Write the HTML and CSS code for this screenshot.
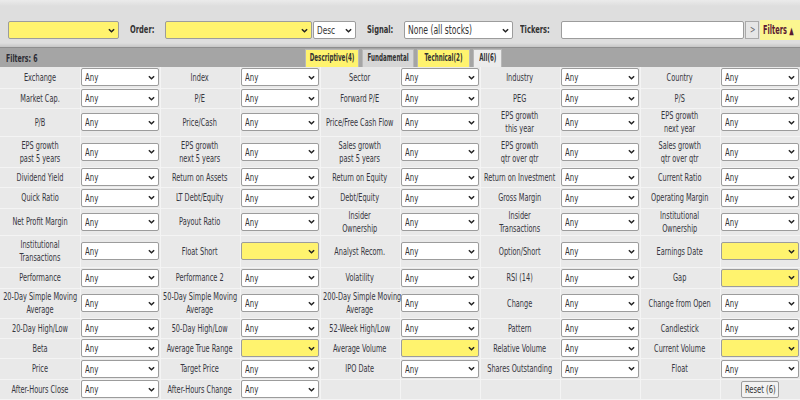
FILE: index.html
```
<!DOCTYPE html>
<html>
<head>
<meta charset="utf-8">
<link rel="stylesheet" href="styles.css">
</head>
<body>
<div class="topbar">
  <div class="sel yellow w-first"><span class="v"></span><svg class="chev" viewBox="0 0 8 5"><path d="M1 1 L4 4 L7 1"/></svg></div>
  <span class="tlabel l-order"><span class="sx">Order:</span></span>
  <div class="sel yellow w-order"><span class="v"></span><svg class="chev" viewBox="0 0 8 5"><path d="M1 1 L4 4 L7 1"/></svg></div>
  <div class="sel w-desc"><span class="v">Desc</span><svg class="chev" viewBox="0 0 8 5"><path d="M1 1 L4 4 L7 1"/></svg></div>
  <span class="tlabel l-signal"><span class="sx">Signal:</span></span>
  <div class="sel w-signal"><span class="v">None (all stocks)</span><svg class="chev" viewBox="0 0 8 5"><path d="M1 1 L4 4 L7 1"/></svg></div>
  <span class="tlabel l-tickers"><span class="sx">Tickers:</span></span>
  <div class="tinput"></div>
  <div class="gobtn"><span class="sx">&gt;</span></div>
  <div class="ftoggle"><span class="sx">Filters <span class="tri">▲</span></span></div>
</div>
<div class="filterbar">
  <div class="fcount"><span class="sx">Filters: 6</span></div>
  <div class="tabs">
    <span class="tab on w-t1"><span class="sx">Descriptive(4)</span></span>
    <span class="tab w-t2"><span class="sx">Fundamental</span></span>
    <span class="tab on w-t3"><span class="sx">Technical(2)</span></span>
    <span class="tab all w-t4"><span class="sx">All(6)</span></span>
  </div>
</div>
<table class="grid">
  <tr class="h21">
    <td class="lab"><div class="lt">Exchange</div></td><td><div class="sel"><span class="v">Any</span><svg class="chev" viewBox="0 0 8 5"><path d="M1 1 L4 4 L7 1"/></svg></div></td>
    <td class="lab"><div class="lt">Index</div></td><td><div class="sel"><span class="v">Any</span><svg class="chev" viewBox="0 0 8 5"><path d="M1 1 L4 4 L7 1"/></svg></div></td>
    <td class="lab"><div class="lt">Sector</div></td><td><div class="sel"><span class="v">Any</span><svg class="chev" viewBox="0 0 8 5"><path d="M1 1 L4 4 L7 1"/></svg></div></td>
    <td class="lab"><div class="lt">Industry</div></td><td><div class="sel"><span class="v">Any</span><svg class="chev" viewBox="0 0 8 5"><path d="M1 1 L4 4 L7 1"/></svg></div></td>
    <td class="lab"><div class="lt">Country</div></td><td><div class="sel"><span class="v">Any</span><svg class="chev" viewBox="0 0 8 5"><path d="M1 1 L4 4 L7 1"/></svg></div></td>
  </tr>
  <tr class="h20">
    <td class="lab"><div class="lt">Market Cap.</div></td><td><div class="sel"><span class="v">Any</span><svg class="chev" viewBox="0 0 8 5"><path d="M1 1 L4 4 L7 1"/></svg></div></td>
    <td class="lab"><div class="lt">P/E</div></td><td><div class="sel"><span class="v">Any</span><svg class="chev" viewBox="0 0 8 5"><path d="M1 1 L4 4 L7 1"/></svg></div></td>
    <td class="lab"><div class="lt">Forward P/E</div></td><td><div class="sel"><span class="v">Any</span><svg class="chev" viewBox="0 0 8 5"><path d="M1 1 L4 4 L7 1"/></svg></div></td>
    <td class="lab"><div class="lt">PEG</div></td><td><div class="sel"><span class="v">Any</span><svg class="chev" viewBox="0 0 8 5"><path d="M1 1 L4 4 L7 1"/></svg></div></td>
    <td class="lab"><div class="lt">P/S</div></td><td><div class="sel"><span class="v">Any</span><svg class="chev" viewBox="0 0 8 5"><path d="M1 1 L4 4 L7 1"/></svg></div></td>
  </tr>
  <tr class="h28">
    <td class="lab"><div class="lt">P/B</div></td><td><div class="sel"><span class="v">Any</span><svg class="chev" viewBox="0 0 8 5"><path d="M1 1 L4 4 L7 1"/></svg></div></td>
    <td class="lab"><div class="lt">Price/Cash</div></td><td><div class="sel"><span class="v">Any</span><svg class="chev" viewBox="0 0 8 5"><path d="M1 1 L4 4 L7 1"/></svg></div></td>
    <td class="lab"><div class="lt">Price/Free Cash Flow</div></td><td><div class="sel"><span class="v">Any</span><svg class="chev" viewBox="0 0 8 5"><path d="M1 1 L4 4 L7 1"/></svg></div></td>
    <td class="lab"><div class="lt">EPS growth<br>this year</div></td><td><div class="sel"><span class="v">Any</span><svg class="chev" viewBox="0 0 8 5"><path d="M1 1 L4 4 L7 1"/></svg></div></td>
    <td class="lab"><div class="lt">EPS growth<br>next year</div></td><td><div class="sel"><span class="v">Any</span><svg class="chev" viewBox="0 0 8 5"><path d="M1 1 L4 4 L7 1"/></svg></div></td>
  </tr>
  <tr class="h31">
    <td class="lab"><div class="lt">EPS growth<br>past 5 years</div></td><td><div class="sel"><span class="v">Any</span><svg class="chev" viewBox="0 0 8 5"><path d="M1 1 L4 4 L7 1"/></svg></div></td>
    <td class="lab"><div class="lt">EPS growth<br>next 5 years</div></td><td><div class="sel"><span class="v">Any</span><svg class="chev" viewBox="0 0 8 5"><path d="M1 1 L4 4 L7 1"/></svg></div></td>
    <td class="lab"><div class="lt">Sales growth<br>past 5 years</div></td><td><div class="sel"><span class="v">Any</span><svg class="chev" viewBox="0 0 8 5"><path d="M1 1 L4 4 L7 1"/></svg></div></td>
    <td class="lab"><div class="lt">EPS growth<br>qtr over qtr</div></td><td><div class="sel"><span class="v">Any</span><svg class="chev" viewBox="0 0 8 5"><path d="M1 1 L4 4 L7 1"/></svg></div></td>
    <td class="lab"><div class="lt">Sales growth<br>qtr over qtr</div></td><td><div class="sel"><span class="v">Any</span><svg class="chev" viewBox="0 0 8 5"><path d="M1 1 L4 4 L7 1"/></svg></div></td>
  </tr>
  <tr class="h20">
    <td class="lab"><div class="lt">Dividend Yield</div></td><td><div class="sel"><span class="v">Any</span><svg class="chev" viewBox="0 0 8 5"><path d="M1 1 L4 4 L7 1"/></svg></div></td>
    <td class="lab"><div class="lt">Return on Assets</div></td><td><div class="sel"><span class="v">Any</span><svg class="chev" viewBox="0 0 8 5"><path d="M1 1 L4 4 L7 1"/></svg></div></td>
    <td class="lab"><div class="lt">Return on Equity</div></td><td><div class="sel"><span class="v">Any</span><svg class="chev" viewBox="0 0 8 5"><path d="M1 1 L4 4 L7 1"/></svg></div></td>
    <td class="lab"><div class="lt">Return on Investment</div></td><td><div class="sel"><span class="v">Any</span><svg class="chev" viewBox="0 0 8 5"><path d="M1 1 L4 4 L7 1"/></svg></div></td>
    <td class="lab"><div class="lt">Current Ratio</div></td><td><div class="sel"><span class="v">Any</span><svg class="chev" viewBox="0 0 8 5"><path d="M1 1 L4 4 L7 1"/></svg></div></td>
  </tr>
  <tr class="h21">
    <td class="lab"><div class="lt">Quick Ratio</div></td><td><div class="sel"><span class="v">Any</span><svg class="chev" viewBox="0 0 8 5"><path d="M1 1 L4 4 L7 1"/></svg></div></td>
    <td class="lab"><div class="lt">LT Debt/Equity</div></td><td><div class="sel"><span class="v">Any</span><svg class="chev" viewBox="0 0 8 5"><path d="M1 1 L4 4 L7 1"/></svg></div></td>
    <td class="lab"><div class="lt">Debt/Equity</div></td><td><div class="sel"><span class="v">Any</span><svg class="chev" viewBox="0 0 8 5"><path d="M1 1 L4 4 L7 1"/></svg></div></td>
    <td class="lab"><div class="lt">Gross Margin</div></td><td><div class="sel"><span class="v">Any</span><svg class="chev" viewBox="0 0 8 5"><path d="M1 1 L4 4 L7 1"/></svg></div></td>
    <td class="lab"><div class="lt">Operating Margin</div></td><td><div class="sel"><span class="v">Any</span><svg class="chev" viewBox="0 0 8 5"><path d="M1 1 L4 4 L7 1"/></svg></div></td>
  </tr>
  <tr class="h25">
    <td class="lab"><div class="lt">Net Profit Margin</div></td><td><div class="sel"><span class="v">Any</span><svg class="chev" viewBox="0 0 8 5"><path d="M1 1 L4 4 L7 1"/></svg></div></td>
    <td class="lab"><div class="lt">Payout Ratio</div></td><td><div class="sel"><span class="v">Any</span><svg class="chev" viewBox="0 0 8 5"><path d="M1 1 L4 4 L7 1"/></svg></div></td>
    <td class="lab"><div class="lt">Insider<br>Ownership</div></td><td><div class="sel"><span class="v">Any</span><svg class="chev" viewBox="0 0 8 5"><path d="M1 1 L4 4 L7 1"/></svg></div></td>
    <td class="lab"><div class="lt">Insider<br>Transactions</div></td><td><div class="sel"><span class="v">Any</span><svg class="chev" viewBox="0 0 8 5"><path d="M1 1 L4 4 L7 1"/></svg></div></td>
    <td class="lab"><div class="lt">Institutional<br>Ownership</div></td><td><div class="sel"><span class="v">Any</span><svg class="chev" viewBox="0 0 8 5"><path d="M1 1 L4 4 L7 1"/></svg></div></td>
  </tr>
  <tr class="h32">
    <td class="lab"><div class="lt">Institutional<br>Transactions</div></td><td><div class="sel"><span class="v">Any</span><svg class="chev" viewBox="0 0 8 5"><path d="M1 1 L4 4 L7 1"/></svg></div></td>
    <td class="lab"><div class="lt">Float Short</div></td><td><div class="sel yellow"><span class="v"></span><svg class="chev" viewBox="0 0 8 5"><path d="M1 1 L4 4 L7 1"/></svg></div></td>
    <td class="lab"><div class="lt">Analyst Recom.</div></td><td><div class="sel"><span class="v">Any</span><svg class="chev" viewBox="0 0 8 5"><path d="M1 1 L4 4 L7 1"/></svg></div></td>
    <td class="lab"><div class="lt">Option/Short</div></td><td><div class="sel"><span class="v">Any</span><svg class="chev" viewBox="0 0 8 5"><path d="M1 1 L4 4 L7 1"/></svg></div></td>
    <td class="lab"><div class="lt">Earnings Date</div></td><td><div class="sel yellow"><span class="v"></span><svg class="chev" viewBox="0 0 8 5"><path d="M1 1 L4 4 L7 1"/></svg></div></td>
  </tr>
  <tr class="h21">
    <td class="lab"><div class="lt">Performance</div></td><td><div class="sel"><span class="v">Any</span><svg class="chev" viewBox="0 0 8 5"><path d="M1 1 L4 4 L7 1"/></svg></div></td>
    <td class="lab"><div class="lt">Performance 2</div></td><td><div class="sel"><span class="v">Any</span><svg class="chev" viewBox="0 0 8 5"><path d="M1 1 L4 4 L7 1"/></svg></div></td>
    <td class="lab"><div class="lt">Volatility</div></td><td><div class="sel"><span class="v">Any</span><svg class="chev" viewBox="0 0 8 5"><path d="M1 1 L4 4 L7 1"/></svg></div></td>
    <td class="lab"><div class="lt">RSI (14)</div></td><td><div class="sel"><span class="v">Any</span><svg class="chev" viewBox="0 0 8 5"><path d="M1 1 L4 4 L7 1"/></svg></div></td>
    <td class="lab"><div class="lt">Gap</div></td><td><div class="sel yellow"><span class="v"></span><svg class="chev" viewBox="0 0 8 5"><path d="M1 1 L4 4 L7 1"/></svg></div></td>
  </tr>
  <tr class="h30">
    <td class="lab"><div class="lt">20-Day Simple Moving<br>Average</div></td><td><div class="sel"><span class="v">Any</span><svg class="chev" viewBox="0 0 8 5"><path d="M1 1 L4 4 L7 1"/></svg></div></td>
    <td class="lab"><div class="lt">50-Day Simple Moving<br>Average</div></td><td><div class="sel"><span class="v">Any</span><svg class="chev" viewBox="0 0 8 5"><path d="M1 1 L4 4 L7 1"/></svg></div></td>
    <td class="lab"><div class="lt">200-Day Simple Moving<br>Average</div></td><td><div class="sel"><span class="v">Any</span><svg class="chev" viewBox="0 0 8 5"><path d="M1 1 L4 4 L7 1"/></svg></div></td>
    <td class="lab"><div class="lt">Change</div></td><td><div class="sel"><span class="v">Any</span><svg class="chev" viewBox="0 0 8 5"><path d="M1 1 L4 4 L7 1"/></svg></div></td>
    <td class="lab"><div class="lt">Change from Open</div></td><td><div class="sel"><span class="v">Any</span><svg class="chev" viewBox="0 0 8 5"><path d="M1 1 L4 4 L7 1"/></svg></div></td>
  </tr>
  <tr class="h20">
    <td class="lab"><div class="lt">20-Day High/Low</div></td><td><div class="sel"><span class="v">Any</span><svg class="chev" viewBox="0 0 8 5"><path d="M1 1 L4 4 L7 1"/></svg></div></td>
    <td class="lab"><div class="lt">50-Day High/Low</div></td><td><div class="sel"><span class="v">Any</span><svg class="chev" viewBox="0 0 8 5"><path d="M1 1 L4 4 L7 1"/></svg></div></td>
    <td class="lab"><div class="lt">52-Week High/Low</div></td><td><div class="sel"><span class="v">Any</span><svg class="chev" viewBox="0 0 8 5"><path d="M1 1 L4 4 L7 1"/></svg></div></td>
    <td class="lab"><div class="lt">Pattern</div></td><td><div class="sel"><span class="v">Any</span><svg class="chev" viewBox="0 0 8 5"><path d="M1 1 L4 4 L7 1"/></svg></div></td>
    <td class="lab"><div class="lt">Candlestick</div></td><td><div class="sel"><span class="v">Any</span><svg class="chev" viewBox="0 0 8 5"><path d="M1 1 L4 4 L7 1"/></svg></div></td>
  </tr>
  <tr class="h20">
    <td class="lab"><div class="lt">Beta</div></td><td><div class="sel"><span class="v">Any</span><svg class="chev" viewBox="0 0 8 5"><path d="M1 1 L4 4 L7 1"/></svg></div></td>
    <td class="lab"><div class="lt">Average True Range</div></td><td><div class="sel yellow"><span class="v"></span><svg class="chev" viewBox="0 0 8 5"><path d="M1 1 L4 4 L7 1"/></svg></div></td>
    <td class="lab"><div class="lt">Average Volume</div></td><td><div class="sel yellow"><span class="v"></span><svg class="chev" viewBox="0 0 8 5"><path d="M1 1 L4 4 L7 1"/></svg></div></td>
    <td class="lab"><div class="lt">Relative Volume</div></td><td><div class="sel"><span class="v">Any</span><svg class="chev" viewBox="0 0 8 5"><path d="M1 1 L4 4 L7 1"/></svg></div></td>
    <td class="lab"><div class="lt">Current Volume</div></td><td><div class="sel yellow"><span class="v"></span><svg class="chev" viewBox="0 0 8 5"><path d="M1 1 L4 4 L7 1"/></svg></div></td>
  </tr>
  <tr class="h21">
    <td class="lab"><div class="lt">Price</div></td><td><div class="sel"><span class="v">Any</span><svg class="chev" viewBox="0 0 8 5"><path d="M1 1 L4 4 L7 1"/></svg></div></td>
    <td class="lab"><div class="lt">Target Price</div></td><td><div class="sel"><span class="v">Any</span><svg class="chev" viewBox="0 0 8 5"><path d="M1 1 L4 4 L7 1"/></svg></div></td>
    <td class="lab"><div class="lt">IPO Date</div></td><td><div class="sel"><span class="v">Any</span><svg class="chev" viewBox="0 0 8 5"><path d="M1 1 L4 4 L7 1"/></svg></div></td>
    <td class="lab"><div class="lt">Shares Outstanding</div></td><td><div class="sel"><span class="v">Any</span><svg class="chev" viewBox="0 0 8 5"><path d="M1 1 L4 4 L7 1"/></svg></div></td>
    <td class="lab"><div class="lt">Float</div></td><td><div class="sel"><span class="v">Any</span><svg class="chev" viewBox="0 0 8 5"><path d="M1 1 L4 4 L7 1"/></svg></div></td>
  </tr>
  <tr class="h20">
    <td class="lab"><div class="lt">After-Hours Close</div></td><td><div class="sel"><span class="v">Any</span><svg class="chev" viewBox="0 0 8 5"><path d="M1 1 L4 4 L7 1"/></svg></div></td>
    <td class="lab"><div class="lt">After-Hours Change</div></td><td><div class="sel"><span class="v">Any</span><svg class="chev" viewBox="0 0 8 5"><path d="M1 1 L4 4 L7 1"/></svg></div></td>
    <td></td><td></td><td></td><td></td><td></td>
    <td class="reset-cell"><span class="reset"><span class="sx">Reset (6)</span></span></td>
  </tr>
</table>
<div class="below">
  <span class="seg s1"></span><span class="seg s2"></span><span class="seg s3"></span><span class="seg s4"></span><span class="seg s5"></span>
</div>
</body>
</html>
```

FILE: styles.css
```
html, body {
  margin: 0;
  padding: 0;
  background: #e6e6e6;
}
body {
  width: 800px;
  height: 400px;
  overflow: hidden;
  font-family: "DejaVu Sans Condensed", "DejaVu Sans", sans-serif;
  font-size: 10.5px;
  color: #363640;
}

/* horizontally condensed text, as in the reference capture */
.sx {
  display: inline-block;
  white-space: nowrap;
  transform: scaleX(0.72);
  transform-origin: left center;
}

/* ---------- top bar ---------- */
.topbar {
  height: 47px;
  box-sizing: border-box;
  padding: 21px 0 0 8px;
  display: flex;
  align-items: flex-start;
  background: linear-gradient(#ebebeb 0, #dedede 6px, #dedede 43px, #c6c6c6 47px);
}
.tlabel {
  font-weight: bold;
  font-size: 11px;
  color: #333;
  line-height: 18px;
  flex: none;
}
.tlabel .sx { transform: scaleX(0.68); }
.l-order { width: 24px; margin: 0 11px; }
.l-signal { width: 27px; margin: 0 10px 0 11px; }
.l-tickers { width: 35px; margin: 0 6px 0 7px; }

.sel {
  box-sizing: border-box;
  height: 18px;
  flex: none;
  display: flex;
  align-items: center;
  justify-content: space-between;
  background: #fff;
  border: 1px solid #9c9c9c;
  border-radius: 2px;
  padding: 0 3px 0 3px;
  color: #333;
  font-size: 10.5px;
}
.sel .v {
  display: inline-block;
  white-space: nowrap;
  transform: scaleX(0.74);
  transform-origin: left center;
}
.sel.yellow { background: #fff36e; }
.chev {
  width: 7px;
  height: 5px;
  flex: none;
}
.chev path {
  fill: none;
  stroke: #222;
  stroke-width: 1.7;
}
.w-first { width: 111px; }
.w-order { width: 147px; }
.w-desc { width: 43px; margin-left: 1px; font-size: 11px; }
.w-signal { width: 109px; font-size: 11.5px; }
.tinput {
  box-sizing: border-box;
  width: 183px;
  height: 18px;
  flex: none;
  background: #fff;
  border: 1px solid #9c9c9c;
  border-radius: 2px;
}
.gobtn {
  box-sizing: border-box;
  width: 14px;
  height: 18px;
  flex: none;
  margin-left: 1px;
  background: #e6e6e6;
  border: 1px solid #aaa;
  color: #666;
  font-size: 10px;
  line-height: 16px;
  padding-left: 4px;
}
.ftoggle {
  width: 40px;
  height: 20px;
  flex: none;
  margin: -1px 0 0 1px;
  padding-left: 3px;
  box-sizing: border-box;
  background: #fbf690;
  color: #5a1a33;
  font-weight: bold;
  font-size: 11.5px;
  line-height: 20px;
}
.ftoggle .sx { transform: scaleX(0.64); }
.tri { font-size: 10px; }

/* ---------- filter bar ---------- */
.filterbar {
  height: 20px;
  box-sizing: border-box;
  background: #a5a5a5;
  display: flex;
  align-items: flex-end;
  border-top: 1px solid #8e8e8e;
}
.fcount {
  width: 305px;
  padding-left: 6px;
  box-sizing: border-box;
  align-self: center;
  font-weight: bold;
  color: #2c2c34;
  font-size: 10.5px;
}
.fcount .sx { transform: scaleX(0.66); }
.tabs {
  display: flex;
  gap: 3px;
}
.tab {
  height: 18px;
  box-sizing: border-box;
  display: flex;
  justify-content: center;
  line-height: 16px;
  background: #d6d6d6;
  border: 1px solid #b8b8b8;
  border-bottom: none;
  font-weight: bold;
  font-size: 10px;
  color: #333;
}
.tab .sx { transform: scaleX(0.62); transform-origin: center center; }
.tab.on { background: #fff36e; }
.tab.all { background: #ececec; }
.w-t1 { width: 54px; }
.w-t2 { width: 52px; }
.w-t3 { width: 53px; }
.w-t4 { width: 29px; }

/* ---------- grid ---------- */
.grid {
  width: 800px;
  table-layout: fixed;
  border-collapse: collapse;
}
.grid td {
  padding: 0;
  border: 1px solid #f4f4f4;
  background: #e9e9e9;
  vertical-align: middle;
}
.grid tr:first-child td { border-top: none; }
.grid td:first-child { border-left: none; }
.grid td:last-child { border-right: none; }
.lt {
  width: 133.34%;
  margin-left: -16.67%;
  text-align: center;
  line-height: 13px;
  white-space: nowrap;
  transform: scaleX(0.695);
}
.grid .sel { width: 78px; margin: 0 auto; }
tr.h20 { height: 20px; }
tr.h21 { height: 21px; }
tr.h25 { height: 25px; }
tr.h28 { height: 28px; }
tr.h30 { height: 30px; }
tr.h31 { height: 31px; }
tr.h32 { height: 32px; }
.reset-cell { text-align: center; vertical-align: bottom; }
.reset {
  display: inline-flex;
  justify-content: center;
  width: 38px;
  height: 17px;
  box-sizing: border-box;
  line-height: 15px;
  border: 1px solid #9c9c9c;
  border-radius: 2px;
  background: #f2f2f2;
  color: #333;
  font-size: 10.5px;
}
.reset .sx { transform-origin: center center; }

.below {
  display: flex;
  height: 10px;
  background: #e2e2e2;
  border-top: 1px solid #f4f4f4;
}
.seg { height: 10px; border-right: 1px solid #cfcfcf; }
.s1 { width: 372px; }
.s2 { width: 160px; }
.s3 { width: 54px; }
.s4 { width: 106px; }
.s5 { width: 54px; }
```
